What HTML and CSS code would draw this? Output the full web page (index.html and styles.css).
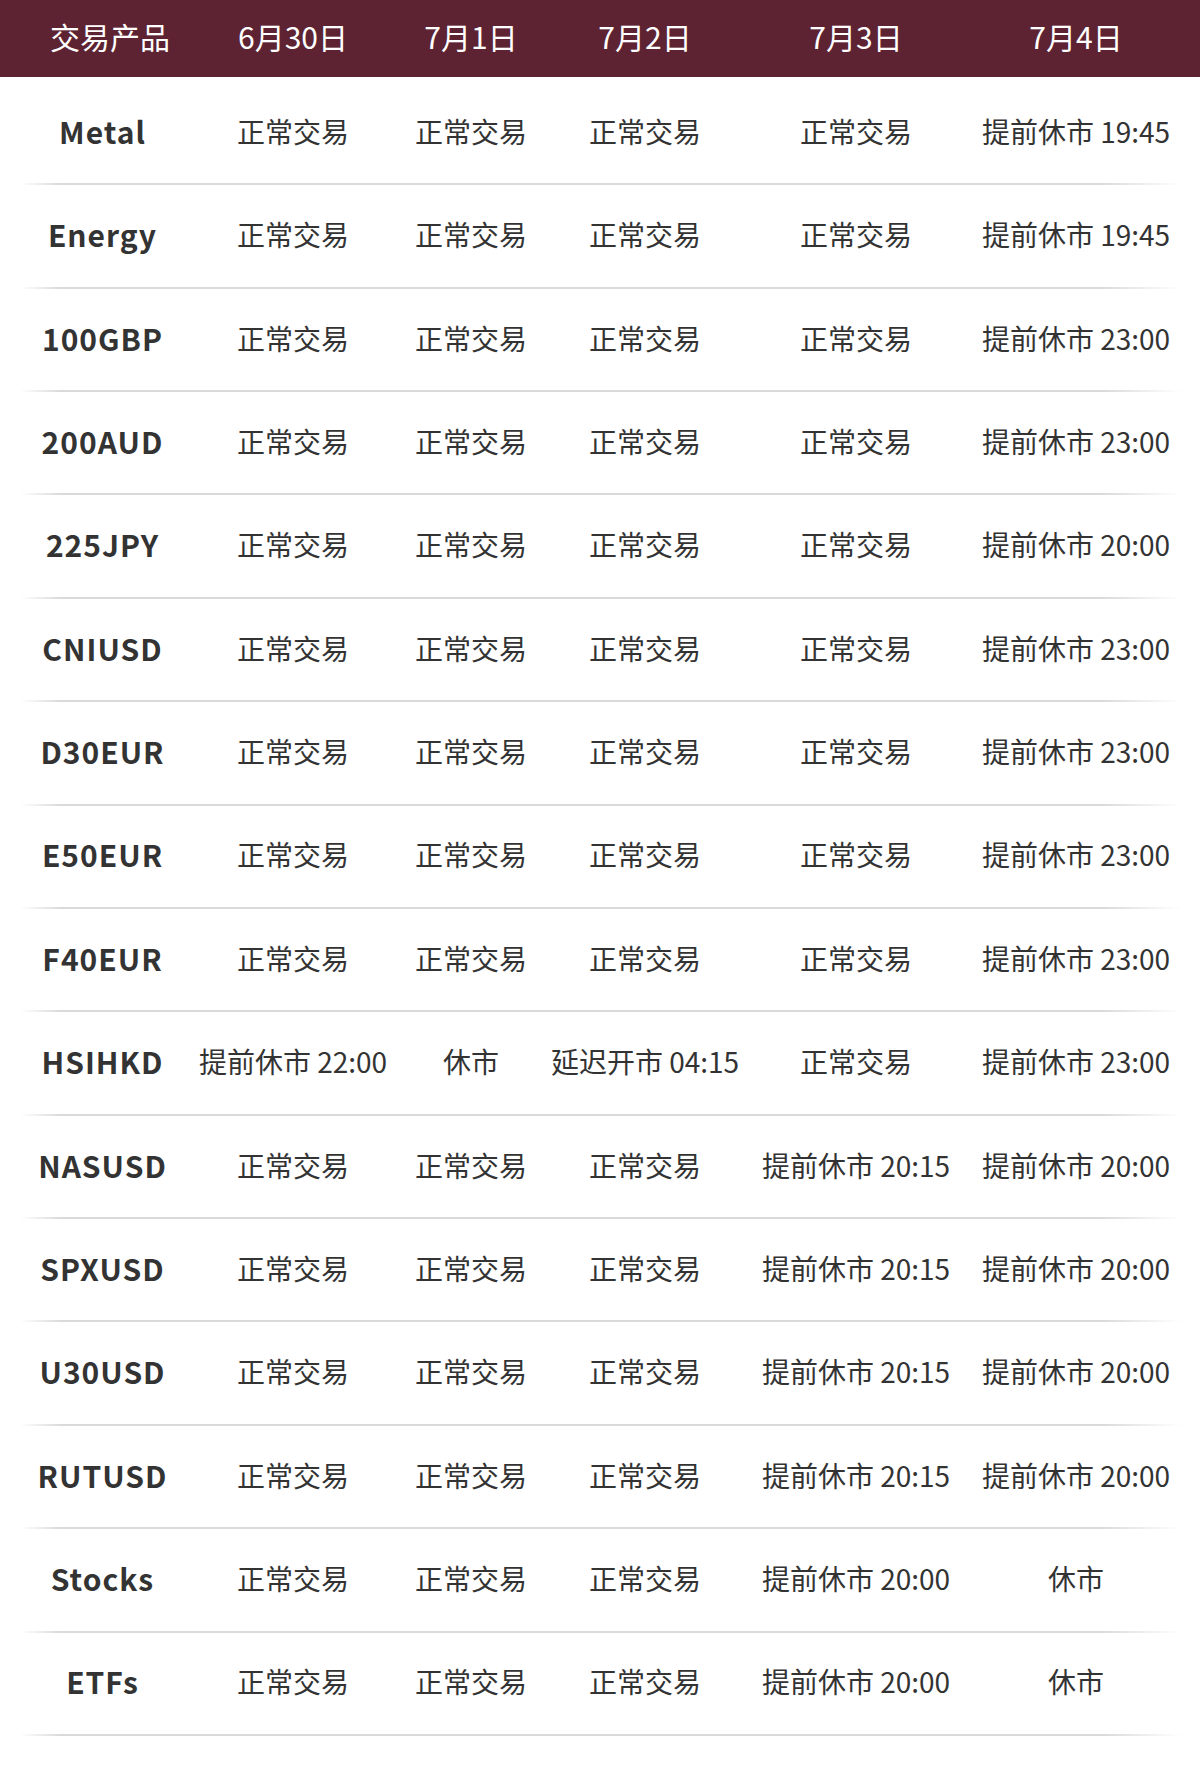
FILE: index.html
```html
<!DOCTYPE html>
<html lang="zh-CN">
<head>
<meta charset="utf-8">
<title>交易时间表</title>
<link rel="stylesheet" href="styles.css">
</head>
<body>
<div class="schedule">
  <div class="head">
    <div class="cols">
      <div class="hcell first">交易产品</div>
      <div class="hcell">6月30日</div>
      <div class="hcell">7月1日</div>
      <div class="hcell">7月2日</div>
      <div class="hcell">7月3日</div>
      <div class="hcell">7月4日</div>
    </div>
  </div>
  <div class="body">
    <div class="row cols"><div class="name">Metal</div><div class="cell">正常交易</div><div class="cell">正常交易</div><div class="cell">正常交易</div><div class="cell">正常交易</div><div class="cell">提前休市 19:45</div></div>
    <div class="row cols"><div class="name">Energy</div><div class="cell">正常交易</div><div class="cell">正常交易</div><div class="cell">正常交易</div><div class="cell">正常交易</div><div class="cell">提前休市 19:45</div></div>
    <div class="row cols"><div class="name">100GBP</div><div class="cell">正常交易</div><div class="cell">正常交易</div><div class="cell">正常交易</div><div class="cell">正常交易</div><div class="cell">提前休市 23:00</div></div>
    <div class="row cols"><div class="name">200AUD</div><div class="cell">正常交易</div><div class="cell">正常交易</div><div class="cell">正常交易</div><div class="cell">正常交易</div><div class="cell">提前休市 23:00</div></div>
    <div class="row cols"><div class="name">225JPY</div><div class="cell">正常交易</div><div class="cell">正常交易</div><div class="cell">正常交易</div><div class="cell">正常交易</div><div class="cell">提前休市 20:00</div></div>
    <div class="row cols"><div class="name">CNIUSD</div><div class="cell">正常交易</div><div class="cell">正常交易</div><div class="cell">正常交易</div><div class="cell">正常交易</div><div class="cell">提前休市 23:00</div></div>
    <div class="row cols"><div class="name">D30EUR</div><div class="cell">正常交易</div><div class="cell">正常交易</div><div class="cell">正常交易</div><div class="cell">正常交易</div><div class="cell">提前休市 23:00</div></div>
    <div class="row cols"><div class="name">E50EUR</div><div class="cell">正常交易</div><div class="cell">正常交易</div><div class="cell">正常交易</div><div class="cell">正常交易</div><div class="cell">提前休市 23:00</div></div>
    <div class="row cols"><div class="name">F40EUR</div><div class="cell">正常交易</div><div class="cell">正常交易</div><div class="cell">正常交易</div><div class="cell">正常交易</div><div class="cell">提前休市 23:00</div></div>
    <div class="row cols"><div class="name">HSIHKD</div><div class="cell">提前休市 22:00</div><div class="cell">休市</div><div class="cell">延迟开市 04:15</div><div class="cell">正常交易</div><div class="cell">提前休市 23:00</div></div>
    <div class="row cols"><div class="name">NASUSD</div><div class="cell">正常交易</div><div class="cell">正常交易</div><div class="cell">正常交易</div><div class="cell">提前休市 20:15</div><div class="cell">提前休市 20:00</div></div>
    <div class="row cols"><div class="name">SPXUSD</div><div class="cell">正常交易</div><div class="cell">正常交易</div><div class="cell">正常交易</div><div class="cell">提前休市 20:15</div><div class="cell">提前休市 20:00</div></div>
    <div class="row cols"><div class="name">U30USD</div><div class="cell">正常交易</div><div class="cell">正常交易</div><div class="cell">正常交易</div><div class="cell">提前休市 20:15</div><div class="cell">提前休市 20:00</div></div>
    <div class="row cols"><div class="name">RUTUSD</div><div class="cell">正常交易</div><div class="cell">正常交易</div><div class="cell">正常交易</div><div class="cell">提前休市 20:15</div><div class="cell">提前休市 20:00</div></div>
    <div class="row cols"><div class="name">Stocks</div><div class="cell">正常交易</div><div class="cell">正常交易</div><div class="cell">正常交易</div><div class="cell">提前休市 20:00</div><div class="cell">休市</div></div>
    <div class="row cols"><div class="name">ETFs</div><div class="cell">正常交易</div><div class="cell">正常交易</div><div class="cell">正常交易</div><div class="cell">提前休市 20:00</div><div class="cell">休市</div></div>
  </div>
</div>
</body>
</html>
```

FILE: styles.css
```css
* {
  box-sizing: border-box;
}

html, body {
  margin: 0;
  padding: 0;
  background: #ffffff;
}

body {
  font-family: "Noto Sans CJK SC", "Noto Sans", sans-serif;
  color: #333333;
}

.schedule {
  width: 1200px;
}

.cols {
  display: grid;
  grid-template-columns: 163px 218px 138px 210px 212px 228px;
  justify-items: center;
  align-items: center;
  white-space: nowrap;
}

.head {
  background: #5d2332;
  height: 77px;
  padding-left: 21px;
  padding-bottom: 6px;
  display: flex;
  align-items: center;
}

.hcell {
  color: #ffffff;
  font-size: 30px;
  line-height: 40px;
  font-weight: 400;
}

.hcell.first {
  padding-left: 15px;
}

.body {
  margin-top: 4.9px;
  padding-left: 21px;
}

.row {
  width: 1169px;
  padding: 28.95px 0 32.45px;
  border-bottom: 2px solid #dcdcdc;
  border-image: linear-gradient(to right, rgba(220, 220, 220, 0) 0, #dadada 40px, #dadada 1080px, rgba(220, 220, 220, 0) 1160px) 1;
}

.cell {
  font-size: 28px;
  line-height: 40px;
  color: #333333;
}

.name {
  font-size: 30px;
  line-height: 40px;
  font-weight: 700;
  letter-spacing: 1px;
  color: #333333;
}
```
